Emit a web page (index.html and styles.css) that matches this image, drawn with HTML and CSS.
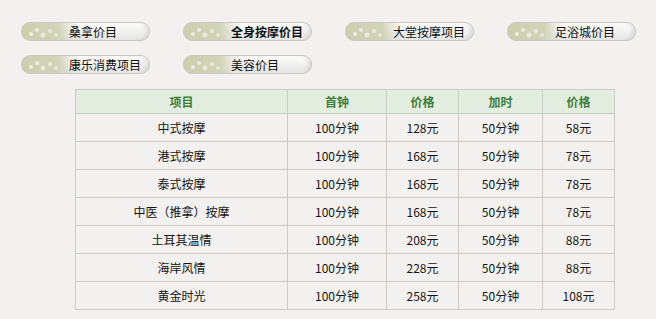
FILE: index.html
```html
<!DOCTYPE html>
<html lang="zh-CN">
<head>
<meta charset="utf-8">
<title>价目表</title>
<link rel="stylesheet" href="styles.css">
</head>
<body>
<div class="page">
  <nav class="tabs">
    <a class="tab">桑拿价目</a>
    <a class="tab tab-active">全身按摩价目</a>
    <a class="tab">大堂按摩项目</a>
    <a class="tab">足浴城价目</a>
    <a class="tab">康乐消费项目</a>
    <a class="tab">美容价目</a>
  </nav>

  <table class="prices">
    <colgroup>
      <col class="c-name">
      <col class="c-first">
      <col class="c-price">
      <col class="c-extra">
      <col class="c-price">
    </colgroup>
    <thead>
      <tr><th>项目</th><th>首钟</th><th>价格</th><th>加时</th><th>价格</th></tr>
    </thead>
    <tbody>
      <tr><td>中式按摩</td><td>100分钟</td><td>128元</td><td>50分钟</td><td>58元</td></tr>
      <tr><td>港式按摩</td><td>100分钟</td><td>168元</td><td>50分钟</td><td>78元</td></tr>
      <tr><td>泰式按摩</td><td>100分钟</td><td>168元</td><td>50分钟</td><td>78元</td></tr>
      <tr><td>中医（推拿）按摩</td><td>100分钟</td><td>168元</td><td>50分钟</td><td>78元</td></tr>
      <tr><td>土耳其温情</td><td>100分钟</td><td>208元</td><td>50分钟</td><td>88元</td></tr>
      <tr><td>海岸风情</td><td>100分钟</td><td>228元</td><td>50分钟</td><td>88元</td></tr>
      <tr><td>黄金时光</td><td>100分钟</td><td>258元</td><td>50分钟</td><td>108元</td></tr>
    </tbody>
  </table>
</div>
</body>
</html>
```

FILE: styles.css
```css
html, body {
  margin: 0;
  padding: 0;
  background: #f2f1ef;
}

body {
  font-family: "Noto Sans CJK SC", "Liberation Sans", sans-serif;
  font-size: 12px;
  color: #111;
}

.page {
  padding: 22px 0 0 21px;
}

/* pill-shaped category tabs */
.tabs {
  display: grid;
  grid-template-columns: repeat(4, 129px);
  column-gap: 33px;
  row-gap: 14px;
}

.tab {
  display: block;
  box-sizing: border-box;
  height: 19px;
  line-height: 17px;
  padding-left: 47px;
  border: 1px solid #c8c8c6;
  border-radius: 9px;
  color: #111;
  text-decoration: none;
  white-space: nowrap;
  background:
    radial-gradient(circle at 9px 11px, rgba(255,255,255,0.6) 0 1.5px, transparent 2.5px),
    radial-gradient(circle at 15px 7px, rgba(255,255,255,0.55) 0 1.5px, transparent 2.5px),
    radial-gradient(circle at 21px 12px, rgba(255,255,255,0.55) 0 2px, transparent 3px),
    radial-gradient(circle at 28px 8px, rgba(255,255,255,0.5) 0 1.5px, transparent 2.5px),
    radial-gradient(circle at 34px 12px, rgba(255,255,255,0.45) 0 1.5px, transparent 2.5px),
    linear-gradient(to right, rgba(202,205,170,0.95) 0, rgba(205,208,176,0.9) 36px, rgba(222,223,208,0.45) 48px, rgba(240,240,238,0) 58px),
    linear-gradient(to bottom, #fbfbfa 0%, #f2f2f0 45%, #e4e4e2 100%);
  box-shadow: inset -6px 0 5px -4px rgba(0,0,0,0.10);
}

.tab-active {
  font-weight: bold;
}

/* price table */
.prices {
  margin: 15px 0 0 54px;
  border-collapse: collapse;
  table-layout: fixed;
  width: 540px;
}

.c-name { width: 212px; }
.c-first { width: 99px; }
.c-price { width: 72px; }
.c-extra { width: 84px; }

.prices th,
.prices td {
  border: 1px solid #cbcbc9;
  text-align: center;
  padding: 0;
  font-size: 12px;
}

.prices th {
  height: 23px;
  background: #e4eee0;
  color: #3f7d3c;
  font-weight: bold;
}

.prices td {
  height: 27px;
  color: #151515;
}
```
